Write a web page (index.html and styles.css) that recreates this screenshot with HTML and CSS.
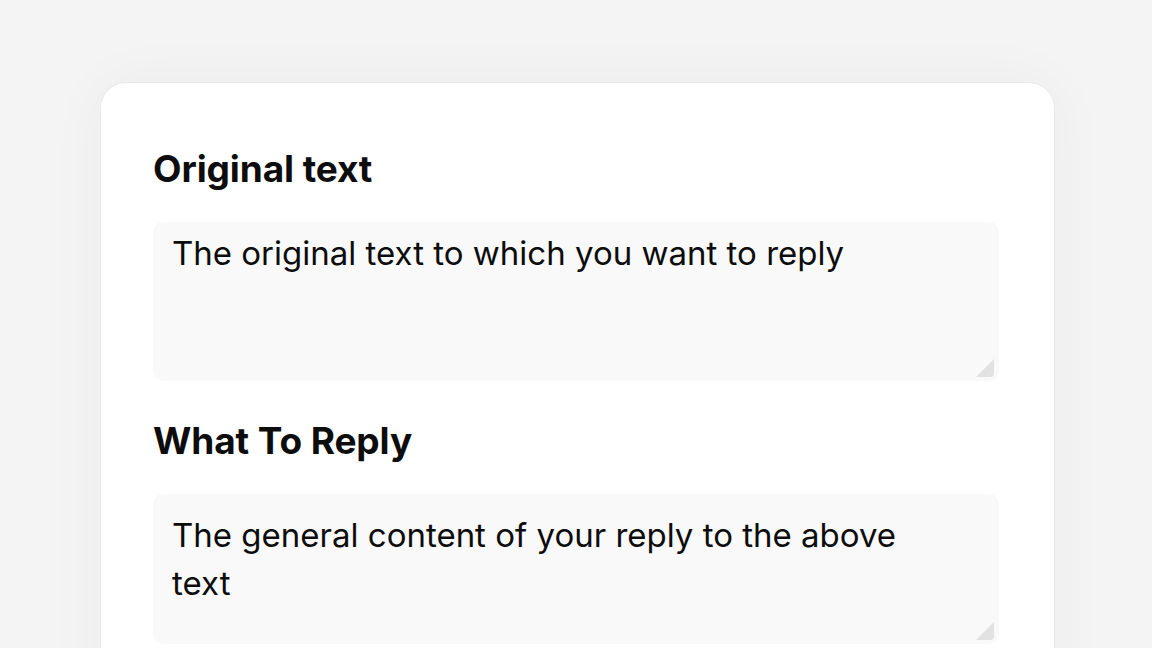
FILE: index.html
```html
<!DOCTYPE html>
<html lang="en">
<head>
  <meta charset="UTF-8">
  <title>Reply Writer</title>
  <link rel="stylesheet" href="styles.css">
</head>
<body>
  <main class="card">
    <label class="label" for="original">Original text</label>
    <div class="field field-tall">
      <textarea id="original" placeholder="The original text to which you want to reply"></textarea>
    </div>

    <label class="label" for="reply">What To Reply</label>
    <div class="field">
      <textarea id="reply" placeholder="The general content of your reply to the above text"></textarea>
    </div>
  </main>
</body>
</html>
```

FILE: styles.css
```css
body { margin: 0; background: #f4f4f4; font-family: "Inter", sans-serif; color: #0d0d0d; overflow: hidden; }
.card { box-sizing: border-box; width: 955px; min-height: 700px; margin: 82px 0 0 100px; padding: 64px 55px 0 52px; background: #fff; border: 1px solid #e9e9e9; border-radius: 26px; box-shadow: 0 0 60px rgba(0, 0, 0, 0.04); }
.label { display: block; font-size: 37px; font-weight: 700; line-height: 44px; margin-bottom: 31px; letter-spacing: -0.1px; }
.field { position: relative; height: 150px; margin-bottom: 38px; }
.field-tall { height: 159px; }
.field::after { content: ""; position: absolute; right: 5px; bottom: 4px; width: 18px; height: 18px; background: #e2e2e2; clip-path: polygon(100% 0, 100% 100%, 0 100%); border-bottom-right-radius: 4px; }
textarea { box-sizing: border-box; width: 100%; height: 100%; resize: none; border: 0; outline: 0; border-radius: 10px; background: #f9f9f9; padding: 17px 50px 11px 19px; font-family: inherit; font-size: 33px; line-height: 48px; color: #0d0d0d; }
.field-tall textarea { padding-top: 7px; }
textarea::placeholder { color: #0d0d0d; opacity: 1; }
```
